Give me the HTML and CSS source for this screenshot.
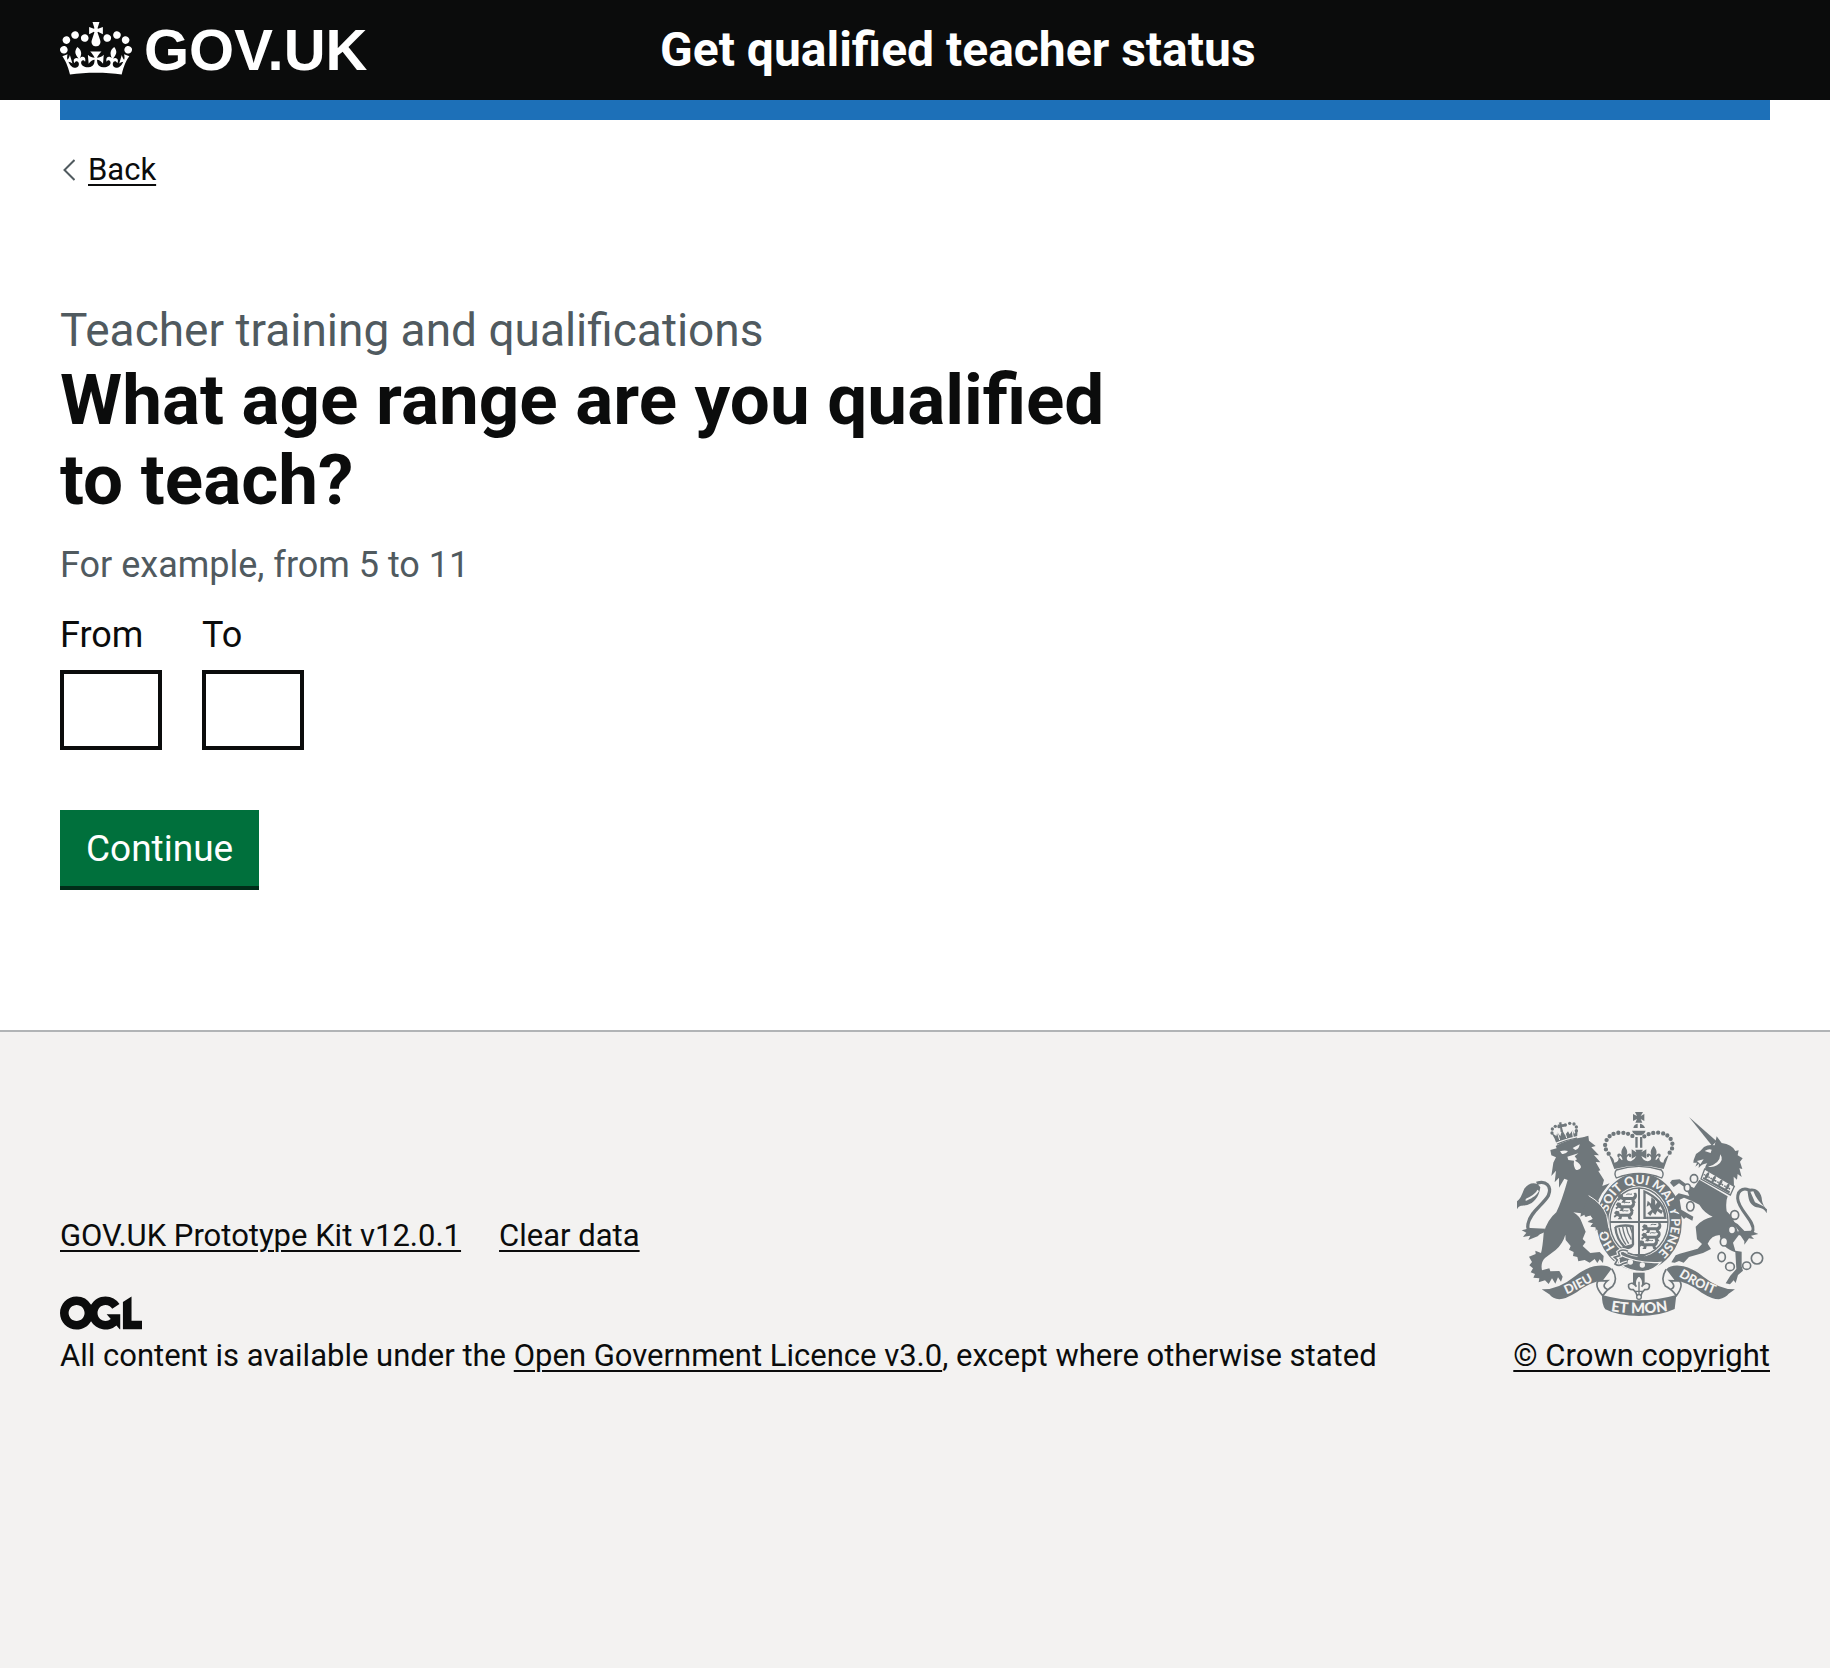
FILE: index.html
```html
<!DOCTYPE html>
<html lang="en">
<head>
  <meta charset="utf-8">
  <meta name="viewport" content="width=device-width, initial-scale=1">
  <title>What age range are you qualified to teach? – Get qualified teacher status</title>
  <link rel="stylesheet" href="styles.css">
</head>
<body>
  <header class="header">
    <div class="header-inner container">
      <a class="logo" href="#">
        <svg class="crown" viewBox="0 0 132 97" aria-hidden="true"><path fill="currentColor" fill-rule="evenodd" d="M25 30.2c3.5 1.5 7.7-.2 9.1-3.7 1.5-3.6-.2-7.8-3.9-9.2-3.6-1.4-7.6.3-9.1 3.9-1.4 3.5.3 7.5 3.9 9zM9 39.5c3.6 1.5 7.8-.2 9.2-3.7 1.5-3.6-.2-7.8-3.9-9.1-3.6-1.5-7.6.2-9.1 3.8-1.4 3.5.3 7.5 3.8 9zM4.4 57.2c3.5 1.5 7.7-.2 9.1-3.8 1.5-3.6-.2-7.7-3.9-9.1-3.5-1.5-7.6.3-9.1 3.8-1.4 3.5.3 7.6 3.9 9.1zm38.3-21.4c3.5 1.5 7.7-.2 9.1-3.8 1.5-3.6-.2-7.7-3.9-9.1-3.6-1.5-7.6.3-9.1 3.8-1.3 3.6.4 7.7 3.9 9.1zm64.4-5.6c-3.6 1.5-7.8-.2-9.1-3.7-1.5-3.6.2-7.8 3.8-9.2 3.6-1.4 7.7.3 9.2 3.9 1.3 3.5-.4 7.5-3.9 9zm15.9 9.3c-3.6 1.5-7.7-.2-9.1-3.7-1.5-3.6.2-7.8 3.7-9.1 3.6-1.5 7.7.2 9.2 3.8 1.5 3.5-.3 7.5-3.8 9zm4.7 17.7c-3.6 1.5-7.8-.2-9.2-3.8-1.5-3.6.2-7.7 3.9-9.1 3.6-1.5 7.7.3 9.2 3.8 1.3 3.5-.4 7.6-3.9 9.1zM89.3 35.8c-3.6 1.5-7.8-.2-9.2-3.8-1.4-3.6.2-7.7 3.9-9.1 3.6-1.5 7.7.3 9.2 3.8 1.4 3.6-.3 7.7-3.9 9.1zM69.7 17.7l8.9 4.7V9.3l-8.9 2.8c-.2-.3-.5-.6-.9-.9L72.4 0H59.6l3.5 11.2c-.3.3-.6.5-.9.9l-8.8-2.8v13.1l8.8-4.7c.3.3.6.7.9.9l-5 15.4v.1c-.2.8-.4 1.6-.4 2.4 0 4.1 3.1 7.5 7 8.1h.2c.3 0 .7.1 1 .1.4 0 .7 0 1-.1h.2c4-.6 7.1-4.1 7.1-8.1 0-.8-.1-1.7-.4-2.4V34l-5.1-15.4c.4-.2.7-.6 1-.9zM66 92.8c16.9 0 32.8 1.1 47.1 3.2 4-16.9 8.9-26.7 14-33.5l-9.6-3.4c1 4.9 1.1 7.2 0 10.2-1.5-1.4-3-4.3-4.2-8.7L108.6 76c2.8-2 5-3.2 7.5-3.3-4.4 9.4-10 11.9-13.6 11.2-4.3-.8-6.3-4.6-5.6-7.9 1-4.7 5.7-5.9 8-.5 4.3-8.7-3-11.4-7.6-8.8 7.1-7.2 7.9-13.5 2.1-21.1-8 6.1-8.1 12.3-4.5 20.8-4.7-5.4-12.1-2.5-9.5 6.2 3.4-5.2 7.9-2 7.2 3.1-.6 4.3-6.4 7.8-13.5 7.2-10.3-.9-10.9-8-11.2-13.8 2.5-.5 7.1 1.8 11 7.3L80.2 60c-4.1 4.4-8 5.3-12.3 5.4 1.4-4.4 8-11.6 8-11.6H55.5s6.4 7.2 7.9 11.6c-4.2-.1-8-1-12.3-5.4l1.4 16.4c3.9-5.5 8.5-7.7 10.9-7.3-.3 5.8-.9 12.8-11.1 13.8-7.2.6-12.9-2.9-13.5-7.2-.7-5 3.8-8.3 7.1-3.1 2.7-8.7-4.6-11.6-9.4-6.2 3.7-8.5 3.6-14.7-4.6-20.8-5.8 7.6-5 13.9 2.2 21.1-4.7-2.6-11.9.1-7.7 8.8 2.3-5.5 7.1-4.2 8.1.5.7 3.3-1.3 7.1-5.7 7.9-3.5.7-9-1.8-13.5-11.2 2.5.1 4.7 1.3 7.5 3.3l-4.7-15.4c-1.2 4.4-2.7 7.2-4.3 8.7-1.1-3-.9-5.3 0-10.2l-9.5 3.4c5 6.9 9.9 16.7 14 33.5 14.8-2.1 30.8-3.2 47.7-3.2z"/></svg>
        <span class="logo-text">GOV.UK</span>
      </a>
      <a class="service-name" href="#">Get qualified teacher status</a>
    </div>
  </header>

  <div class="container">
    <div class="phase-bar"></div>
    <a class="back" href="#">
      <svg class="chevron" viewBox="0 0 12 22" aria-hidden="true"><path d="M11.500 1L1.500 11l10 10" fill="none" stroke="#505a5f" stroke-width="2"/></svg>
      <span class="back-text">Back</span>
    </a>

    <main class="main">
      <form class="form" action="#" method="post">
        <fieldset class="fieldset" aria-describedby="age-hint">
          <legend class="legend">
            <span class="caption">Teacher training and qualifications</span>
            <h1 class="heading">What age range are you qualified to teach?</h1>
          </legend>
          <div class="hint" id="age-hint">For example, from 5 to 11</div>
          <div class="ages">
            <div class="field">
              <label class="label" for="age-from">From</label>
              <input class="input" id="age-from" name="from" type="text" inputmode="numeric">
            </div>
            <div class="field">
              <label class="label" for="age-to">To</label>
              <input class="input" id="age-to" name="to" type="text" inputmode="numeric">
            </div>
          </div>
        </fieldset>
        <button class="button" type="submit">Continue</button>
      </form>
    </main>
  </div>

  <footer class="footer">
    <div class="footer-inner container">
      <div class="footer-meta">
        <nav class="footer-links" aria-label="Support links">
          <a class="link" href="#">GOV.UK Prototype Kit v12.0.1</a>
          <a class="link" href="#">Clear data</a>
        </nav>
        <svg class="ogl" viewBox="0 0 483.2 195.7" aria-hidden="true"><path fill="currentColor" d="M421.500 142.800V.1l-50.700 32.300v161.100h112.400v-50.700zm-122.300-9.600A47.120 47.120 0 0 1 221 97.800c0-26 21.100-47.100 47.100-47.100 16.700 0 31.400 8.700 39.700 21.800l42.700-27.200A97.630 97.630 0 0 0 268.100 0c-36.500 0-68.300 20.100-85.100 49.700A98 98 0 0 0 97.800 0C43.900 0 0 43.900 0 97.800s43.900 97.800 97.800 97.800c36.500 0 68.300-20.100 85.100-49.700a97.760 97.760 0 0 0 149.600 25.400l19.400 22.200h3v-87.800h-80l24.300 27.500zM97.800 145c-26 0-47.100-21.100-47.100-47.100s21.100-47.100 47.100-47.100 47.100 21.100 47.100 47.100S123.800 145 97.800 145"/></svg>
        <p class="licence">All content is available under the <a class="link" href="#">Open Government Licence v3.0</a>, except where otherwise stated</p>
      </div>

      <a class="copyright" href="#">
        <svg class="arms" viewBox="42 36 750 612" aria-hidden="true">
          <defs>
            <path id="garter" d="M408 480A97 114 0 0 1 408 252A97 114 0 0 1 408 480"/>
            <path id="scroll-left" d="M174 590Q232 568 296 527"/>
            <path id="scroll-mid" d="M314 631Q408 649 504 631"/>
            <path id="scroll-right" d="M516 522Q578 564 650 588"/>
            <g id="fleur">
              <path d="M0-26C10-14 11-4 5 5C10-4 22-6 21 5C19 12 12 8 14 3C8 6 6 12 5 20H-5C-6 12-8 6-14 3C-12 8-19 12-21 5C-22-6-10-4-5 5C-11-4-10-14 0-26z"/>
            </g>
            <g id="passant">
              <path d="M-30-6L-24-13L-15-11L-13-4H12C20-4 22-12 17-16L25-17C31-8 27 1 20 5L25 13H14L11 5H-6L-8 13H-19L-14 6L-21 3L-28 8L-31 3L-25-1z"/>
              <path d="M-4-11C2-16 8-10 13-13" fill="none" stroke="#6f777b" stroke-width="3"/>
            </g>
          </defs>

          <!-- lion -->
          <g fill="#6f777b">
            <path d="M163 134C159 128 157 122 155 116L145 98L160 108L163 97L172 109L177 89L186 105L195 94L200 103L209 90L213 102L224 88L222 116Q191 120 163 134z"/>
            <path d="M163 97l7 23M184 91l7 23M207 88l4 24" stroke="#f3f2f1" stroke-width="3"/>
            <circle cx="147" cy="99" r="5"/><circle cx="148" cy="87" r="5"/><circle cx="157" cy="79" r="5"/><circle cx="168" cy="80" r="5"/>
            <circle cx="187" cy="75" r="5"/><circle cx="200" cy="70" r="5"/><circle cx="213" cy="72" r="5"/><circle cx="220" cy="81" r="5"/><circle cx="220" cy="92" r="5"/>
            <path d="M167 68l8-2 1 7 8-1 1 8-8 1 3 14-7 1-2-15-6 1-1-8 6-1z"/>
            <path d="M142 150L161 145L158 138Q196 117 240 112L256 107L258 122L278 138L265 142L288 166L273 165L292 187L278 186L292 211L286 213L303 240L298 258L320 250L297 280L286 301Q306 328 312 360L318 391L307 387L300 401L292 387L278 393L277 382L262 380L271 370L254 366L270 357L263 346L247 351L251 341L232 350L234 340L211 337Q230 348 236 366L248 395L239 417L248 426L239 438L262 459L290 456L302 468L300 489L290 478L283 489L275 477L260 488L245 480L226 484L223 471L210 468L212 456L198 449L203 438L188 420L187 404Q180 430 158 450L126 474Q112 488 117 511L139 505L142 514L169 513L179 530L174 545L165 532L157 551L147 535L137 552L126 541L107 547L109 535L91 533L96 522L83 517L90 505L79 496L87 486L78 470L98 462L97 452L114 459Q119 442 122 400Q132 360 160 337Q176 304 194 240L184 236L168 263L168 233L155 247L159 212L145 228L151 188L142 206L159 172L145 166z"/>
            <path d="M126 391C94 408 70 397 75 372C82 335 119 316 136 287C148 258 128 240 101 250" fill="none" stroke="#6f777b" stroke-width="10"/>
            <path d="M112 262C102 243 76 247 64 266C57 280 56 292 42 304L42 328C50 313 59 319 73 315C91 310 108 293 112 262zM82 384L56 391L70 398L60 411L82 407L76 420L104 409L128 386z"/>
          </g>
          <g fill="#f3f2f1">
            <path d="M171 154Q184 150 195 153Q188 164 177 162zM209 144L230 133Q229 147 217 150zM193 170L226 160L215 169L222 178L216 182Q234 191 234 202Q230 212 220 210Q210 202 213 182L196 180z"/>
            <path d="M68 297C81 289 97 283 103 269L108 273C98 291 82 296 68 303z"/>
          </g>
          <path d="M142 137Q195 112 246 107" fill="none" stroke="#f3f2f1" stroke-width="4"/>

          <!-- garter and quartered shield -->
          <g>
            <ellipse cx="409" cy="366" rx="130" ry="149" fill="#6f777b" stroke="#f3f2f1" stroke-width="5"/>
            <ellipse cx="408" cy="365" rx="92" ry="106" fill="#f3f2f1"/>
            <ellipse cx="408" cy="365" rx="87" ry="101" fill="none" stroke="#6f777b" stroke-width="4"/>
            <path d="M408 264V466M321 366H495" stroke="#6f777b" stroke-width="6"/>
            <path d="M421 269V357H491Q490 298 421 269zM428 280V350H483Q479 308 428 280z" fill="#6f777b" fill-rule="evenodd"/>
            <path d="M433 340L446 329L439 315L431 320L434 302L444 311L445 292L456 300L457 315L466 302L475 315L467 326L480 332L475 342L463 333L457 345L449 337L442 348z" fill="#6f777b"/>
            <g fill="#6f777b">
              <use href="#passant" x="374" y="295"/><use href="#passant" x="368" y="320"/><use href="#passant" x="363" y="345"/>
              <use href="#passant" x="447" y="386"/><use href="#passant" x="445" y="411"/><use href="#passant" x="437" y="434"/>
            </g>
            <path d="M337 381Q364 373 389 379L390 433Q382 449 365 442L391 435M337 381Q340 418 366 442" fill="none" stroke="#6f777b" stroke-width="7"/>
            <path d="M348 384Q354 414 369 434M359 381Q363 409 377 431M370 380Q373 400 385 419M381 380L388 399" fill="none" stroke="#6f777b" stroke-width="4"/>
            <path d="M390 462H434L415 476z" fill="#6f777b"/>
          </g>
          <g class="motto garter-text">
            <text><textPath href="#garter" startOffset="17%">HO</textPath></text>
            <text><textPath href="#garter" startOffset="36%">SOIT</textPath></text>
            <text><textPath href="#garter" startOffset="49%">QUI</textPath></text>
            <text><textPath href="#garter" startOffset="64%">MAL Y</textPath></text>
            <text><textPath href="#garter" startOffset="82%">PENSE</textPath></text>
          </g>
          <path d="M344 462Q405 492 473 487Q455 510 420 515Q380 515 350 492z" fill="#6f777b" stroke="#f3f2f1" stroke-width="4"/>
          <path d="M375 454Q356 445 346 456L350 467L334 472L343 480L336 492Q350 501 360 491L373 487" fill="none" stroke="#f3f2f1" stroke-width="12"/>
          <path d="M375 454Q356 445 346 456L350 467L334 472L343 480L336 492Q350 501 360 491L373 487" fill="none" stroke="#6f777b" stroke-width="5"/>
          <circle cx="382" cy="486" r="8" fill="#f3f2f1"/><circle cx="418" cy="495" r="8" fill="#f3f2f1"/>
          <!-- lion forepaw laid over the garter -->
          <path d="M257 287Q298 310 312 348L317 391L307 386L302 399L292 387L281 391L277 381L263 379L270 369L254 364L270 357L262 346L246 350L240 330z" fill="#6f777b"/>
          <path d="M257 287Q298 310 311 346L318 385" fill="none" stroke="#f3f2f1" stroke-width="3"/>

          <!-- royal crown -->
          <g fill="#6f777b">
            <path d="M396 36H420L413 48L424 42V63L413 57L418 68H397L402 57L390 63V42L402 48zM391 84Q393 72 404 71V84zM411 71Q423 73 426 84H411zM387 92H428Q423 106 408 106Q392 106 387 92zM397 111H404V143H397zM411 111H418V143H411z"/>
            <path d="M334 207L318 165Q334 174 334 188Q350 185 346 170L357 181L371 172Q370 185 384 184Q396 178 400 168L386 176V148L400 157L397 149H420L415 157L430 148V176L415 168Q420 182 434 184Q446 182 445 172L459 181L469 170Q467 186 481 188Q483 174 497 165L482 207Q408 188 334 207z"/>
            <use href="#fleur" x="364" y="163"/><use href="#fleur" x="452" y="163"/>
            <path d="M340 210Q408 188 475 210Q485 222 476 234Q408 207 340 234Q332 220 340 210z" fill="#f3f2f1" stroke="#6f777b" stroke-width="4"/>
          </g>
          <path d="M317 161Q301 143 309 124Q320 99 350 98Q374 97 393 111M500 158Q513 143 506 122Q494 99 466 98Q440 97 421 111" fill="none" stroke="#6f777b" stroke-width="13" stroke-linecap="round" stroke-dasharray="0 14.500"/>

          <!-- unicorn -->
          <g fill="#6f777b">
            <path d="M558 51L641 124L627 137z"/>
            <path d="M572 180L579 162Q592 155 603 141Q617 132 635 136L641 109L656 129Q687 133 697 153L707 151L704 166L719 175L711 185L718 207L709 205L716 231L704 222L702 239L692 230L693 259L607 216Q604 199 613 190Q598 191 587 204L588 191L577 200L582 188L571 188z"/>
            <path d="M605 207L694 259L682 285L594 237z" fill="#f3f2f1" stroke="#6f777b" stroke-width="4"/>
            <path d="M599 236L602 231L681 274L679 281z"/>
            <g transform="translate(612 227) rotate(29) scale(.5)"><use href="#fleur"/></g>
            <g transform="translate(632 238) rotate(29) scale(.5)"><use href="#fleur"/></g>
            <g transform="translate(652 249) rotate(29) scale(.5)"><use href="#fleur"/></g>
            <g transform="translate(673 261) rotate(29) scale(.5)"><use href="#fleur"/></g>
            <path d="M589 239L674 289Q667 306 671 334Q692 353 698 378L708 404L690 428L697 452L716 455L716 499L720 512L705 525L698 549L692 541L681 553L668 550L682 527L700 507L697 457Q656 444 650 405Q625 406 614 431L624 447L600 459L558 471L542 488L528 483L515 488L505 487L518 466L530 461L584 446L597 432L582 418L578 380Q598 356 629 350Q603 338 589 314L567 303L543 293L530 299L535 329L553 340L571 350L568 362L549 352L543 357L519 329L508 318L514 292L527 280L559 288L553 274L545 262L528 250L512 261L501 248L507 240L530 238L550 253L573 264z"/>
            <path d="M701 401C718 398 742 416 750 390C755 363 706 330 704 295C704 266 727 259 750 278" fill="none" stroke="#6f777b" stroke-width="9"/>
            <path d="M733 269C748 260 771 267 776 293C777 313 787 324 792 328L791 340C781 318 763 326 751 317C736 307 736 288 733 269zM704 394L724 424L724 434L738 415L753 417L744 407L766 402L744 392zM684 361L720 410L731 400L704 372z"/>
          </g>
          <path d="M605 153Q616 146 626 149L623 159zM652 163Q665 182 642 196Q628 204 615 200Q651 192 652 163zM582 183L602 178L592 193zM742 275L756 307L786 321Q762 303 751 274z" fill="#f3f2f1"/>

          <!-- chain -->
          <g fill="#f3f2f1" stroke="#6f777b" stroke-width="5">
            <ellipse cx="573" cy="236" rx="11" ry="12"/><ellipse cx="553" cy="263" rx="9" ry="11"/><ellipse cx="562" cy="319" rx="11" ry="14"/>
            <ellipse cx="695" cy="345" rx="12" ry="13"/><ellipse cx="687" cy="390" rx="11" ry="12"/><ellipse cx="663" cy="425" rx="11" ry="13"/>
            <ellipse cx="656" cy="471" rx="11" ry="14"/><ellipse cx="681" cy="500" rx="13" ry="12"/><ellipse cx="731" cy="497" rx="12" ry="11"/><circle cx="762" cy="475" r="17"/>
          </g>

          <!-- scroll -->
          <g fill="#6f777b">
            <path d="M116 568Q165 570 217 528Q255 498 285 497Q313 494 326 506L299 542Q262 544 221 577Q187 598 169 598Q149 596 139 583z"/>
            <path d="M696 568Q650 569 601 530Q562 498 529 497Q502 495 490 508L516 542Q553 544 596 578Q628 598 648 598Q669 592 677 581z"/>
            <path d="M297 585Q355 601 408 601Q463 601 520 585L515 627Q470 648 408 648Q345 648 307 628Q296 613 297 585z"/>
          </g>
          <path d="M326 506Q347 536 329 559Q313 568 299 587Q274 558 285 543L314 542Q292 561 315 569M490 508Q471 535 487 558Q508 569 520 587Q542 558 530 543L501 542Q523 560 502 569" fill="none" stroke="#6f777b" stroke-width="5"/>
          <g class="motto scroll-text">
            <text class="scroll-side"><textPath href="#scroll-left" startOffset="46%">DIEU</textPath></text>
            <text><textPath href="#scroll-mid" startOffset="50%">ET MON</textPath></text>
            <text class="scroll-side"><textPath href="#scroll-right" startOffset="48%">DROIT</textPath></text>
          </g>

          <!-- fleur-de-lis badge -->
          <path d="M390 518H425V551H390z" fill="#6f777b"/>
          <path d="M408 525Q427 546 416 560Q427 543 439 554Q442 570 425 569Q417 576 414 586H402Q399 576 391 569Q374 570 377 554Q389 543 400 560Q389 546 408 525z" fill="#f3f2f1" stroke="#6f777b" stroke-width="5"/>
          <circle cx="408" cy="591" r="7" fill="#f3f2f1" stroke="#6f777b" stroke-width="4"/>
          <path d="M396 574H420M408 545V583" stroke="#6f777b" stroke-width="4"/>
        </svg>
        <span class="copyright-text">© Crown copyright</span>
      </a>
    </div>
  </footer>
</body>
</html>
```
FILE: styles.css
```css
*,
*::before,
*::after {
  box-sizing: border-box;
}

html {
  background: #f3f2f1;
}

body {
  margin: 0;
  background: #fff;
  color: #0b0c0c;
  font-family: Roboto, "Liberation Sans", sans-serif;
  font-size: 36px;
  line-height: 50px;
}

.container {
  padding: 0 60px;
}

/* Header */

.header {
  background: #0b0c0c;
}

.header-inner {
  display: grid;
  grid-template-columns: 1fr 2fr;
  column-gap: 45px;
  align-items: center;
  padding-top: 20px;
  padding-bottom: 20px;
}

.logo {
  display: flex;
  align-items: center;
  gap: 12px;
  color: #fff;
  text-decoration: none;
}

.crown {
  display: block;
  width: 72px;
  height: 53px;
  margin-bottom: 4px;
}

.logo-text {
  font-family: "Liberation Sans", Arial, sans-serif;
  font-size: 58px;
  font-weight: 700;
  line-height: 60px;
}

.service-name {
  color: #fff;
  font-size: 48px;
  font-weight: 700;
  line-height: 60px;
  text-decoration: none;
}

.phase-bar {
  height: 20px;
  background: #1d70b8;
}

/* Back link */

.back {
  display: flex;
  align-items: center;
  gap: 13px;
  width: fit-content;
  margin-top: 30px;
  padding-left: 3px;
  color: #0b0c0c;
  font-size: 31px;
  line-height: 40px;
  text-decoration: none;
}

.chevron {
  width: 12px;
  height: 22px;
}

.back-text,
.copyright-text,
.link {
  text-decoration: underline;
  text-decoration-thickness: 2px;
  text-underline-offset: 4px;
}

/* Question */

.main {
  padding: 110px 0 140px;
}

.fieldset {
  min-width: 0;
  margin: 0;
  padding: 0;
  border: 0;
}

.legend {
  width: 64%;
  padding: 0;
}

.caption {
  display: block;
  color: #505a5f;
  font-size: 46px;
  line-height: 60px;
}

.heading {
  margin: 0;
  font-size: 71px;
  font-weight: 700;
  line-height: 80px;
}

.hint {
  margin: 20px 0;
  color: #505a5f;
}

.ages {
  display: flex;
  gap: 40px;
}

.label {
  display: block;
  margin-bottom: 10px;
}

.input {
  display: block;
  width: 102px;
  height: 80px;
  padding: 10px;
  border: 4px solid #0b0c0c;
  border-radius: 0;
  background: #fff;
  color: #0b0c0c;
  font: inherit;
}

.button {
  display: block;
  margin: 60px 0 4px;
  padding: 14px 26px 12px;
  border: 0;
  border-radius: 0;
  background: #00703c;
  box-shadow: 0 4px 0 #002d18;
  color: #fff;
  font: inherit;
  font-size: 37px;
}

/* Footer */

.footer {
  border-top: 2px solid #b1b4b6;
  background: #f3f2f1;
  font-size: 31px;
  line-height: 40px;
}

.footer-inner {
  display: flex;
  align-items: flex-end;
  justify-content: space-between;
  gap: 60px;
  padding-top: 80px;
  padding-bottom: 80px;
}

.footer-links {
  display: flex;
  flex-wrap: wrap;
  gap: 10px 38px;
}

.link {
  color: #0b0c0c;
}

.ogl {
  display: block;
  width: 82px;
  height: 34px;
  margin: 40px 0 6px;
}

.licence {
  margin: 0;
}

.copyright {
  display: flex;
  flex: none;
  flex-direction: column;
  align-items: center;
  gap: 20px;
  color: #0b0c0c;
  text-decoration: none;
}

.arms {
  display: block;
  width: 250px;
  height: 204px;
}

.motto {
  fill: #f3f2f1;
  font-family: Lato, sans-serif;
  font-weight: 900;
  text-anchor: middle;
}

.garter-text {
  font-size: 37px;
}

.scroll-text {
  font-size: 44px;
}

.scroll-side {
  font-size: 38px;
}
```
